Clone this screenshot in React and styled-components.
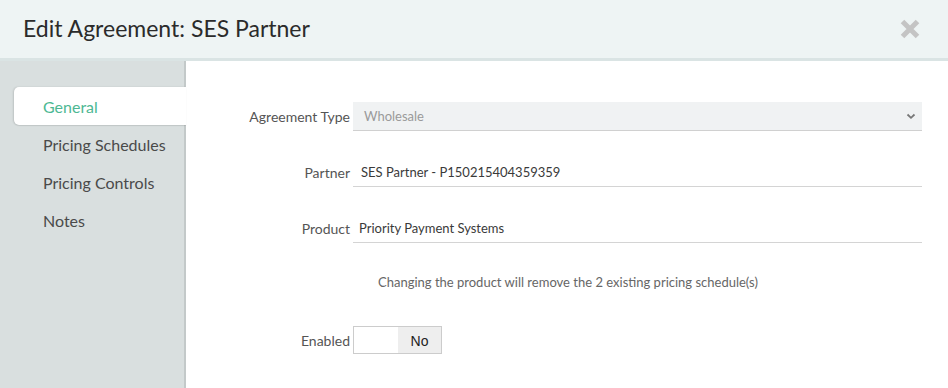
import styled, { createGlobalStyle } from "styled-components";

const GlobalStyle = createGlobalStyle`
  html, body {
    margin: 0;
    padding: 0;
    background: #fff;
  }
  body {
    font-family: Lato, "Open Sans", sans-serif;
  }
`;

const Modal = styled.div`
  width: 948px;
  height: 388px;
  display: flex;
  flex-direction: column;
  overflow: hidden;
`;

const Header = styled.div`
  height: 58px;
  flex: none;
  background: #eef4f4;
  border-bottom: 3px solid #dae4e4;
  display: flex;
  align-items: center;
  justify-content: space-between;
  padding: 0 28px 0 23px;
  h1 {
    margin: 0;
    font-size: 23px;
    font-weight: 400;
    color: #2b2b2b;
    padding-bottom: 3px;
  }
`;

const Close = styled.button`
  border: 0;
  background: none;
  padding: 0;
  width: 20px;
  height: 20px;
  cursor: pointer;
  display: flex;
`;

const Body = styled.div`
  flex: 1;
  display: flex;
`;

const Sidebar = styled.div`
  width: 184px;
  flex: none;
  background: #d9dfdf;
  border-right: 2px solid #c3c9c9;
  padding-top: 26px;
  box-sizing: content-box;
`;

const Tab = styled.div`
  height: 38px;
  display: flex;
  align-items: center;
  padding-left: 43px;
  font-size: 16px;
  color: ${(p) => (p.$active ? "#4db893" : "#4a4a4a")};
  ${(p) =>
    p.$active &&
    `
    background: #fff;
    margin-left: 14px;
    margin-right: -2px;
    padding-left: 29px;
    border-radius: 5px 0 0 5px;
    box-shadow: -1px 0 2px rgba(0,0,0,0.12), 0 1px 1px rgba(0,0,0,0.08);
  `}
`;

const Content = styled.div`
  flex: 1;
  padding: 41px 26px 0 0;
`;

const Row = styled.div`
  display: grid;
  grid-template-columns: 164px 1fr;
  align-items: center;
  column-gap: 3px;
  margin-bottom: ${(p) => p.$gap || 0}px;
`;

const Label = styled.label`
  text-align: right;
  font-size: 14px;
  color: #555;
`;

const Select = styled.div`
  height: 28px;
  background: #f0f2f3;
  border-bottom: 1px solid #d0d0d0;
  display: flex;
  align-items: center;
  justify-content: space-between;
  padding: 0 6px 0 11px;
  font-size: 13px;
  color: #9a9a9a;
`;

const Field = styled.div`
  height: 28px;
  border-bottom: 1px solid #d4d4d4;
  display: flex;
  align-items: center;
  padding-left: ${(p) => p.$pad || 8}px;
  font-size: 13px;
  color: #3a3a3a;
`;

const Note = styled.div`
  font-size: 13px;
  color: #666;
  padding-left: 192px;
  margin: 31px 0 36px;
`;

const Toggle = styled.div`
  display: flex;
  width: 87px;
  height: 26px;
  border: 1px solid #cccccc;
  font-family: "Liberation Sans", Arial, sans-serif;
  font-size: 14px;
  color: #222;
`;

const ToggleSide = styled.span`
  flex: ${(p) => (p.$off ? "0 0 43px" : "1")};
  background: ${(p) => (p.$off ? "#eeeeee" : "#fff")};
  display: flex;
  align-items: center;
  justify-content: center;
  padding-top: 1px;
`;

const Chevron = () => (
  <svg width="10" height="8" viewBox="0 0 10 8">
    <path d="M1.5 2.5 L5 5.8 L8.5 2.5" fill="none" stroke="#777" strokeWidth="1.8" />
  </svg>
);

const CloseIcon = () => (
  <svg width="20" height="20" viewBox="0 0 20 20">
    <path d="M2.5 2.5 L17.5 17.5 M17.5 2.5 L2.5 17.5" stroke="#c4c4c4" strokeWidth="5" strokeLinecap="butt" />
  </svg>
);

export default function App() {
  const tabs = ["General", "Pricing Schedules", "Pricing Controls", "Notes"];
  return (
    <Modal>
      <GlobalStyle />
      <Header>
        <h1>Edit Agreement: SES Partner</h1>
        <Close aria-label="close">
          <CloseIcon />
        </Close>
      </Header>
      <Body>
        <Sidebar>
          {tabs.map((t, i) => (
            <Tab key={t} $active={i === 0}>
              {t}
            </Tab>
          ))}
        </Sidebar>
        <Content>
          <Row $gap={27}>
            <Label>Agreement Type</Label>
            <Select>
              Wholesale
              <Chevron />
            </Select>
          </Row>
          <Row $gap={27}>
            <Label>Partner</Label>
            <Field>SES Partner - P150215404359359</Field>
          </Row>
          <Row>
            <Label>Product</Label>
            <Field $pad={6}>Priority Payment Systems</Field>
          </Row>
          <Note>Changing the product will remove the 2 existing pricing schedule(s)</Note>
          <Row>
            <Label>Enabled</Label>
            <Toggle>
              <ToggleSide />
              <ToggleSide $off>No</ToggleSide>
            </Toggle>
          </Row>
        </Content>
      </Body>
    </Modal>
  );
}
